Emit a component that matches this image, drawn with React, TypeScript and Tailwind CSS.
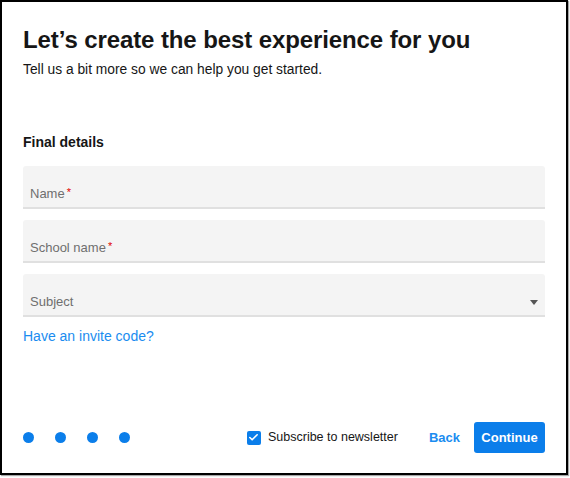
import { Check } from "lucide-react";

function Field({ label, required, select }: { label: string; required?: boolean; select?: boolean }) {
  return (
    <div className="flex h-[43px] items-center justify-between rounded-t-[3px] border-b-2 border-[#e0e0e0] bg-[#f4f4f4] pl-[7px] pr-[7px] pt-[14px]">
      <span className="text-[13px] text-[#6f6f6f]">
        {label}
        {required && <span className="ml-[2px] align-top text-[11px] text-[#e00000]">*</span>}
      </span>
      {select && (
        <svg width="8" height="5" viewBox="0 0 8 5" className="mt-[2px]">
          <path d="M0 0h8L4 5z" fill="#555" />
        </svg>
      )}
    </div>
  );
}

export default function App() {
  return (
    <div className="h-[478px] w-[570px] bg-white font-['Liberation_Sans',Arial,sans-serif]">
      <div className="flex h-[475px] w-[568px] flex-col border-2 border-black px-[21px] shadow-[1px_1px_1px_rgba(0,0,0,0.35)]">
        <h1 className="mt-[22px] text-[24px] font-bold leading-[32px] tracking-[-0.1px] text-[#161616]">
          Let’s create the best experience for you
        </h1>
        <p className="mt-[5px] text-[13.8px] leading-[18px] text-[#161616]">
          Tell us a bit more so we can help you get started.
        </p>

        <h2 className="mt-[54px] text-[14px] font-bold leading-[18px] text-[#161616]">Final details</h2>

        <div className="mt-[15px] flex flex-col gap-[11px]">
          <Field label="Name" required />
          <Field label="School name" required />
          <Field label="Subject" select />
        </div>

        <a className="mt-[10px] text-[14px] leading-[18px] text-[#1a8cf0]">Have an invite code?</a>

        <div className="mt-auto mb-[20px] flex items-center">
          <div className="flex items-center gap-[21px]">
            <span className="h-[11px] w-[11px] rounded-full bg-[#0b7eea]" />
            <span className="h-[11px] w-[11px] rounded-full bg-[#0b7eea]" />
            <span className="h-[11px] w-[11px] rounded-full bg-[#0b7eea]" />
            <span className="h-[11px] w-[11px] rounded-full bg-[#0b7eea]" />
          </div>
          <label className="ml-auto flex items-center gap-[7px] text-[12.5px] text-[#161616]">
            <span className="flex h-[14px] w-[14px] items-center justify-center rounded-[2px] bg-[#0b7eea]">
              <Check className="h-[11px] w-[11px] text-white" strokeWidth={3.5} />
            </span>
            Subscribe to newsletter
          </label>
          <button className="ml-[31px] text-[13px] font-bold text-[#1a8cf0]">Back</button>
          <button className="ml-[14px] h-[31px] w-[71px] rounded-[3px] bg-[#0b7eea] text-[13px] font-bold text-white">
            Continue
          </button>
        </div>
      </div>
    </div>
  );
}
